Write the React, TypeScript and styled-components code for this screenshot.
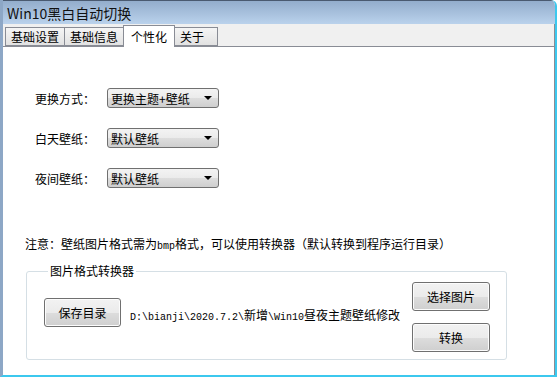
import React from "react"
import styled, {createGlobalStyle} from "styled-components";

const GlobalStyle = createGlobalStyle`
  html, body {
    margin: 0;
    padding: 0;
    background: #ffffff;
  }
  body {
    font-family: "Noto Sans CJK SC", "Liberation Sans", sans-serif;
    font-size: 12px;
    color: #000;
  }
`

const StyledWindow = styled.div`
  width: 557px;
  height: 377px;
  box-sizing: border-box;
  display: flex;
  flex-direction: column;
  border-left: 3px solid #8da7c6;
  border-right: 2px solid #3cc8ee;
  border-bottom: 2px solid #3cc8ee;
  border-top-right-radius: 6px;
  overflow: hidden;
  background: #ffffff;
`

const StyledTitleBar = styled.div`
  height: 24px;
  flex-shrink: 0;
  display: flex;
  align-items: center;
  padding-left: 4px;
  background: linear-gradient(#93adcc, #bad2ec);
  border-top: 1px solid #4a5a70;
  box-sizing: border-box;
  font-size: 14px;
  line-height: 14px;
  color: #111;
`

const StyledTabStrip = styled.div`
  height: 22px;
  flex-shrink: 0;
  display: flex;
  align-items: flex-end;
  padding-left: 2px;
  background: #f0f0f0;
  border-bottom: 1px solid #898c95;
  border-right: 1px solid #898c95;
`

const StyledTab = styled.div<{ active?: boolean }>`
  box-sizing: border-box;
  height: ${props => props.active ? 22 : 19}px;
  margin-bottom: ${props => props.active ? -1 : 0}px;
  padding: 0 ${props => props.active ? 7 : 5}px;
  margin-right: -1px;
  display: flex;
  align-items: center;
  justify-content: ${props => props.active ? "center" : "flex-start"};
  border: 1px solid #898c95;
  border-bottom: ${props => props.active ? "none" : "1px solid #898c95"};
  background: ${props => props.active ? "#ffffff" : "linear-gradient(#f5f5f5, #e2e2e2)"};
  position: relative;
  z-index: ${props => props.active ? 1 : 0};
  font-size: 12px;
  line-height: 12px;
`

const StyledContent = styled.div`
  flex: 1;
  display: flex;
  flex-direction: column;
  padding: 41px 0 0 22px;
  border-right: 1px solid #898c95;
`

const StyledFormRow = styled.div`
  display: flex;
  align-items: center;
  height: 20px;
  margin-bottom: 20px;
  padding-left: 10px;
`

const StyledLabel = styled.div`
  width: 72px;
  font-size: 12px;
`

const StyledCombo = styled.div`
  box-sizing: border-box;
  width: 112px;
  height: 20px;
  display: flex;
  align-items: center;
  justify-content: space-between;
  padding: 0 6px 0 3px;
  border: 1px solid #707070;
  border-radius: 3px;
  background: linear-gradient(#f3f3f3 0%, #ebebeb 50%, #dddddd 51%, #cfcfcf 100%);
  font-size: 12px;
`

const StyledArrow = styled.div`
  width: 0;
  height: 0;
  border-left: 4px solid transparent;
  border-right: 4px solid transparent;
  border-top: 4px solid #000;
`

const StyledNote = styled.div`
  margin-top: 29px;
  font-size: 12px;
  line-height: 14px;
`

const StyledGroup = styled.fieldset`
  box-sizing: border-box;
  width: 481px;
  height: 95px;
  margin: 11px 0 0 1px;
  padding: 0 16px 0 17px;
  border: 1px solid #d5dfe5;
  border-radius: 3px;
  display: flex;
  align-items: flex-start;
  justify-content: space-between;
`

const StyledLegend = styled.legend`
  padding: 0 2px;
  margin-left: 4px;
  font-size: 12px;
  line-height: 12px;
`

const StyledLeft = styled.div`
  display: flex;
  align-items: center;
  gap: 9px;
  margin-top: 21px;
`

const StyledButtons = styled.div`
  display: flex;
  flex-direction: column;
  gap: 12px;
  margin-top: 5px;
`

const StyledButton = styled.div<{ width?: number }>`
  box-sizing: border-box;
  width: ${props => props.width || 78}px;
  height: 29px;
  display: flex;
  align-items: center;
  justify-content: center;
  border: 1px solid #707070;
  border-radius: 3px;
  background: linear-gradient(#f2f2f2 0%, #ebebeb 50%, #dddddd 51%, #cfcfcf 100%);
  box-shadow: inset 0 0 0 1px #fcfcfc;
  font-size: 12px;
`

const StyledPath = styled.div`
  font-size: 12px;
  margin-top: 4px;
  white-space: nowrap;
`

const StyledMono = styled.span`
  font-family: "Liberation Mono", monospace;
  font-size: 10px;
`

const combos = [
    {label: "更换方式：", value: "更换主题+壁纸"},
    {label: "白天壁纸：", value: "默认壁纸"},
    {label: "夜间壁纸：", value: "默认壁纸"},
]

const tabs = ["基础设置", "基础信息", "个性化", "关于"]

export default function App() {
    return (
        <>
            <GlobalStyle/>
            <StyledWindow>
                <StyledTitleBar>Win10黑白自动切换</StyledTitleBar>
                <StyledTabStrip>
                    {tabs.map(t => (
                        <StyledTab key={t} active={t === "个性化"} style={t === "关于" ? {width: 44} : undefined}>
                            {t}
                        </StyledTab>
                    ))}
                </StyledTabStrip>
                <StyledContent>
                    {combos.map(c => (
                        <StyledFormRow key={c.label}>
                            <StyledLabel>{c.label}</StyledLabel>
                            <StyledCombo>
                                <span>{c.value}</span>
                                <StyledArrow/>
                            </StyledCombo>
                        </StyledFormRow>
                    ))}
                    <StyledNote>
                        注意：壁纸图片格式需为<StyledMono>bmp</StyledMono>格式，可以使用转换器（默认转换到程序运行目录）
                    </StyledNote>
                    <StyledGroup>
                        <StyledLegend>图片格式转换器</StyledLegend>
                        <StyledLeft>
                            <StyledButton width={77}>保存目录</StyledButton>
                            <StyledPath>
                                <StyledMono>D:\bianji\2020.7.2\</StyledMono>新增<StyledMono>\Win10</StyledMono>昼夜主题壁纸修改
                            </StyledPath>
                        </StyledLeft>
                        <StyledButtons>
                            <StyledButton>选择图片</StyledButton>
                            <StyledButton>转换</StyledButton>
                        </StyledButtons>
                    </StyledGroup>
                </StyledContent>
            </StyledWindow>
        </>
    )
}
